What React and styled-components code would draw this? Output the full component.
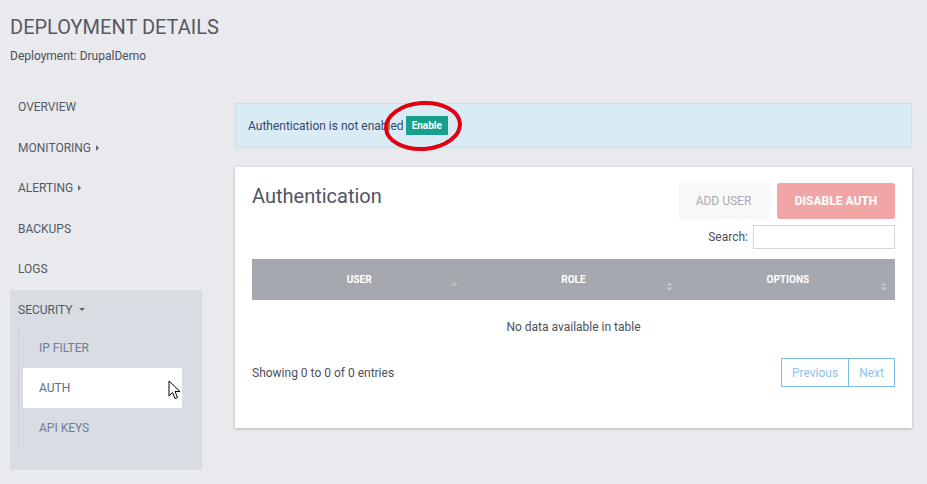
import React from 'react';
import styled, { createGlobalStyle } from 'styled-components';

const GlobalStyle = createGlobalStyle`
  html, body {
    margin: 0;
    padding: 0;
    background: #e9eaee;
    font-family: Roboto, "Liberation Sans", sans-serif;
  }
`;

const Page = styled.div`
  width: 927px;
  height: 484px;
  box-sizing: border-box;
  padding: 15px 15px 0 10px;
  overflow: hidden;
`;

const Title = styled.h1`
  margin: 0;
  font-size: 20px;
  line-height: 24px;
  font-weight: 400;
  color: #545962;
`;

const SubTitle = styled.div`
  margin-top: 10px;
  font-size: 12px;
  line-height: 14px;
  color: #4a505a;
`;

const Layout = styled.div`
  display: flex;
  gap: 33px;
  margin-top: 24px;
`;

const Sidebar = styled.nav`
  width: 192px;
  flex-shrink: 0;
  display: flex;
  flex-direction: column;
`;

const NavItem = styled.div`
  height: 40.5px;
  display: flex;
  align-items: center;
  padding-left: 8px;
  font-size: 12px;
  color: #525a66;
  text-transform: uppercase;
  gap: 4px;
`;

const Caret = styled.span`
  display: inline-block;
  width: 0;
  height: 0;
  border-top: 3px solid transparent;
  border-bottom: 3px solid transparent;
  border-left: 3px solid #666;
  margin-left: 1px;
`;

const CaretDown = styled.span`
  display: inline-block;
  width: 0;
  height: 0;
  border-left: 3.5px solid transparent;
  border-right: 3.5px solid transparent;
  border-top: 3.5px solid #666;
  margin-left: 2px;
`;

const SecurityBlock = styled.div`
  background: #d8dce3;
  padding-bottom: 22px;
`;

const SubMenu = styled.div`
  margin-left: 8px;
  margin-top: -2px;
  padding-left: 4px;
  border-left: 1px dotted #c3c7cd;
  margin-right: 20px;
`;

const SubItem = styled.div`
  position: relative;
  height: 40px;
  display: flex;
  align-items: center;
  padding-left: 16px;
  font-size: 12px;
  color: ${(p) => (p.$active ? '#5a6b94' : '#6f7c98')};
  background: ${(p) => (p.$active ? '#ffffff' : 'transparent')};
`;

const Cursor = styled.svg`
  position: absolute;
  left: 145px;
  top: 12px;
`;

const Main = styled.main`
  flex: 1;
  padding-top: 16px;
  display: flex;
  flex-direction: column;
  gap: 19px;
`;

const Alert = styled.div`
  height: 45px;
  box-sizing: border-box;
  background: #d9ecf6;
  border: 1px solid #c0e3ef;
  display: flex;
  align-items: center;
  padding-left: 12px;
  font-size: 12px;
  color: #38476a;
  gap: 2px;
`;

const EnableWrap = styled.span`
  position: relative;
  display: inline-flex;
`;

const EnableButton = styled.span`
  background: #16a08c;
  color: #fff;
  font-size: 10px;
  font-weight: 700;
  height: 19px;
  line-height: 19px;
  padding: 0 6px;
`;

const Circle = styled.svg`
  position: absolute;
  left: -24px;
  top: -16px;
  pointer-events: none;
`;

const Card = styled.section`
  background: #fff;
  box-shadow: 0 1px 3px rgba(0, 0, 0, 0.22);
  padding: 16px 17px 41px 17px;
`;

const CardHead = styled.div`
  display: flex;
  justify-content: space-between;
  align-items: flex-start;
`;

const CardTitle = styled.h2`
  margin: 0;
  padding-top: 1px;
  font-size: 20px;
  line-height: 24px;
  font-weight: 400;
  color: #50555e;
`;

const Actions = styled.div`
  display: flex;
  gap: 8px;
`;

const ActionButton = styled.button`
  height: 36px;
  width: ${(p) => p.$w}px;
  border: none;
  border-radius: 3px;
  font-family: inherit;
  font-size: 12px;
  font-weight: ${(p) => (p.$danger ? 700 : 400)};
  background: ${(p) => (p.$danger ? '#f2a5a5' : '#f7f8fa')};
  color: ${(p) => (p.$danger ? '#ffffff' : '#a8abb0')};
  padding: 0;
`;

const SearchRow = styled.div`
  display: flex;
  justify-content: flex-end;
  align-items: center;
  gap: 5px;
  margin-top: 6px;
  font-size: 12px;
  color: #4a505a;
`;

const SearchInput = styled.input`
  width: 142px;
  height: 24px;
  box-sizing: border-box;
  border: 1px solid #d6d6d6;
  margin: 0;
`;

const Table = styled.table`
  width: 100%;
  margin-top: 10px;
  border-collapse: collapse;
  table-layout: fixed;
`;

const Th = styled.th`
  position: relative;
  height: 41px;
  padding: 0;
  background: #a5a8ae;
  color: #fff;
  font-size: 10px;
  font-weight: 700;
  text-align: center;
`;

const SortIcon = styled.svg`
  position: absolute;
  right: 8px;
  bottom: 9px;
`;

const EmptyCell = styled.td`
  padding: 20px 0;
  line-height: 14px;
  text-align: center;
  font-size: 12px;
  color: #4a505a;
`;

const Footer = styled.div`
  display: flex;
  justify-content: space-between;
  align-items: center;
  margin-top: 4px;
`;

const Info = styled.div`
  font-size: 12px;
  color: #4a505a;
`;

const Pager = styled.div`
  display: flex;
`;

const PageButton = styled.span`
  height: 29px;
  box-sizing: border-box;
  display: flex;
  align-items: center;
  padding: 0 ${(p) => p.$pad}px;
  border: 1px solid #7dbde8;
  margin-left: ${(p) => (p.$first ? 0 : -1)}px;
  font-size: 12px;
  color: #8cc3e8;
`;

const Sort = ({ up, both }) => (
  <SortIcon width="7" height="9" viewBox="0 0 7 9">
    {(up || both) && <path d="M0.5 3.5 L3.5 0.5 L6.5 3.5 Z" fill="#c7c9cd" />}
    {both && <path d="M0.5 5.5 L3.5 8.5 L6.5 5.5 Z" fill="#c7c9cd" />}
  </SortIcon>
);

const App = () => (
  <>
    <GlobalStyle />
    <Page>
      <Title>DEPLOYMENT DETAILS</Title>
      <SubTitle>Deployment: DrupalDemo</SubTitle>
      <Layout>
        <Sidebar>
          <NavItem>Overview</NavItem>
          <NavItem>
            Monitoring <Caret />
          </NavItem>
          <NavItem>
            Alerting <Caret />
          </NavItem>
          <NavItem>Backups</NavItem>
          <NavItem>Logs</NavItem>
          <SecurityBlock>
            <NavItem>
              Security <CaretDown />
            </NavItem>
            <SubMenu>
              <SubItem>IP FILTER</SubItem>
              <SubItem $active>
                AUTH
                <Cursor width="14" height="21" viewBox="0 0 14 21">
                  <path
                    d="M1 1 L1 16 L4.5 12.5 L7 18.5 L9.5 17.5 L7 11.5 L12 11.5 Z"
                    fill="#fff"
                    stroke="#000"
                    strokeWidth="1"
                    strokeLinejoin="round"
                  />
                </Cursor>
              </SubItem>
              <SubItem>API KEYS</SubItem>
            </SubMenu>
          </SecurityBlock>
        </Sidebar>
        <Main>
          <Alert>
            Authentication is not enabled
            <EnableWrap>
              <EnableButton>Enable</EnableButton>
              <Circle width="84" height="54" viewBox="0 0 84 54">
                <ellipse
                  cx="41"
                  cy="26"
                  rx="37"
                  ry="23"
                  fill="none"
                  stroke="#e0000f"
                  strokeWidth="4"
                  transform="rotate(-4 41 26)"
                />
              </Circle>
            </EnableWrap>
          </Alert>
          <Card>
            <CardHead>
              <CardTitle>Authentication</CardTitle>
              <Actions>
                <ActionButton $w={91}>ADD USER</ActionButton>
                <ActionButton $w={118} $danger>
                  DISABLE AUTH
                </ActionButton>
              </Actions>
            </CardHead>
            <SearchRow>
              Search:
              <SearchInput />
            </SearchRow>
            <Table>
              <thead>
                <tr>
                  <Th>
                    USER
                    <Sort up />
                  </Th>
                  <Th>
                    ROLE
                    <Sort both />
                  </Th>
                  <Th>
                    OPTIONS
                    <Sort both />
                  </Th>
                </tr>
              </thead>
              <tbody>
                <tr>
                  <EmptyCell colSpan={3}>No data available in table</EmptyCell>
                </tr>
              </tbody>
            </Table>
            <Footer>
              <Info>Showing 0 to 0 of 0 entries</Info>
              <Pager>
                <PageButton $first $pad={10}>
                  Previous
                </PageButton>
                <PageButton $pad={10}>Next</PageButton>
              </Pager>
            </Footer>
          </Card>
        </Main>
      </Layout>
    </Page>
  </>
);

export default App;
